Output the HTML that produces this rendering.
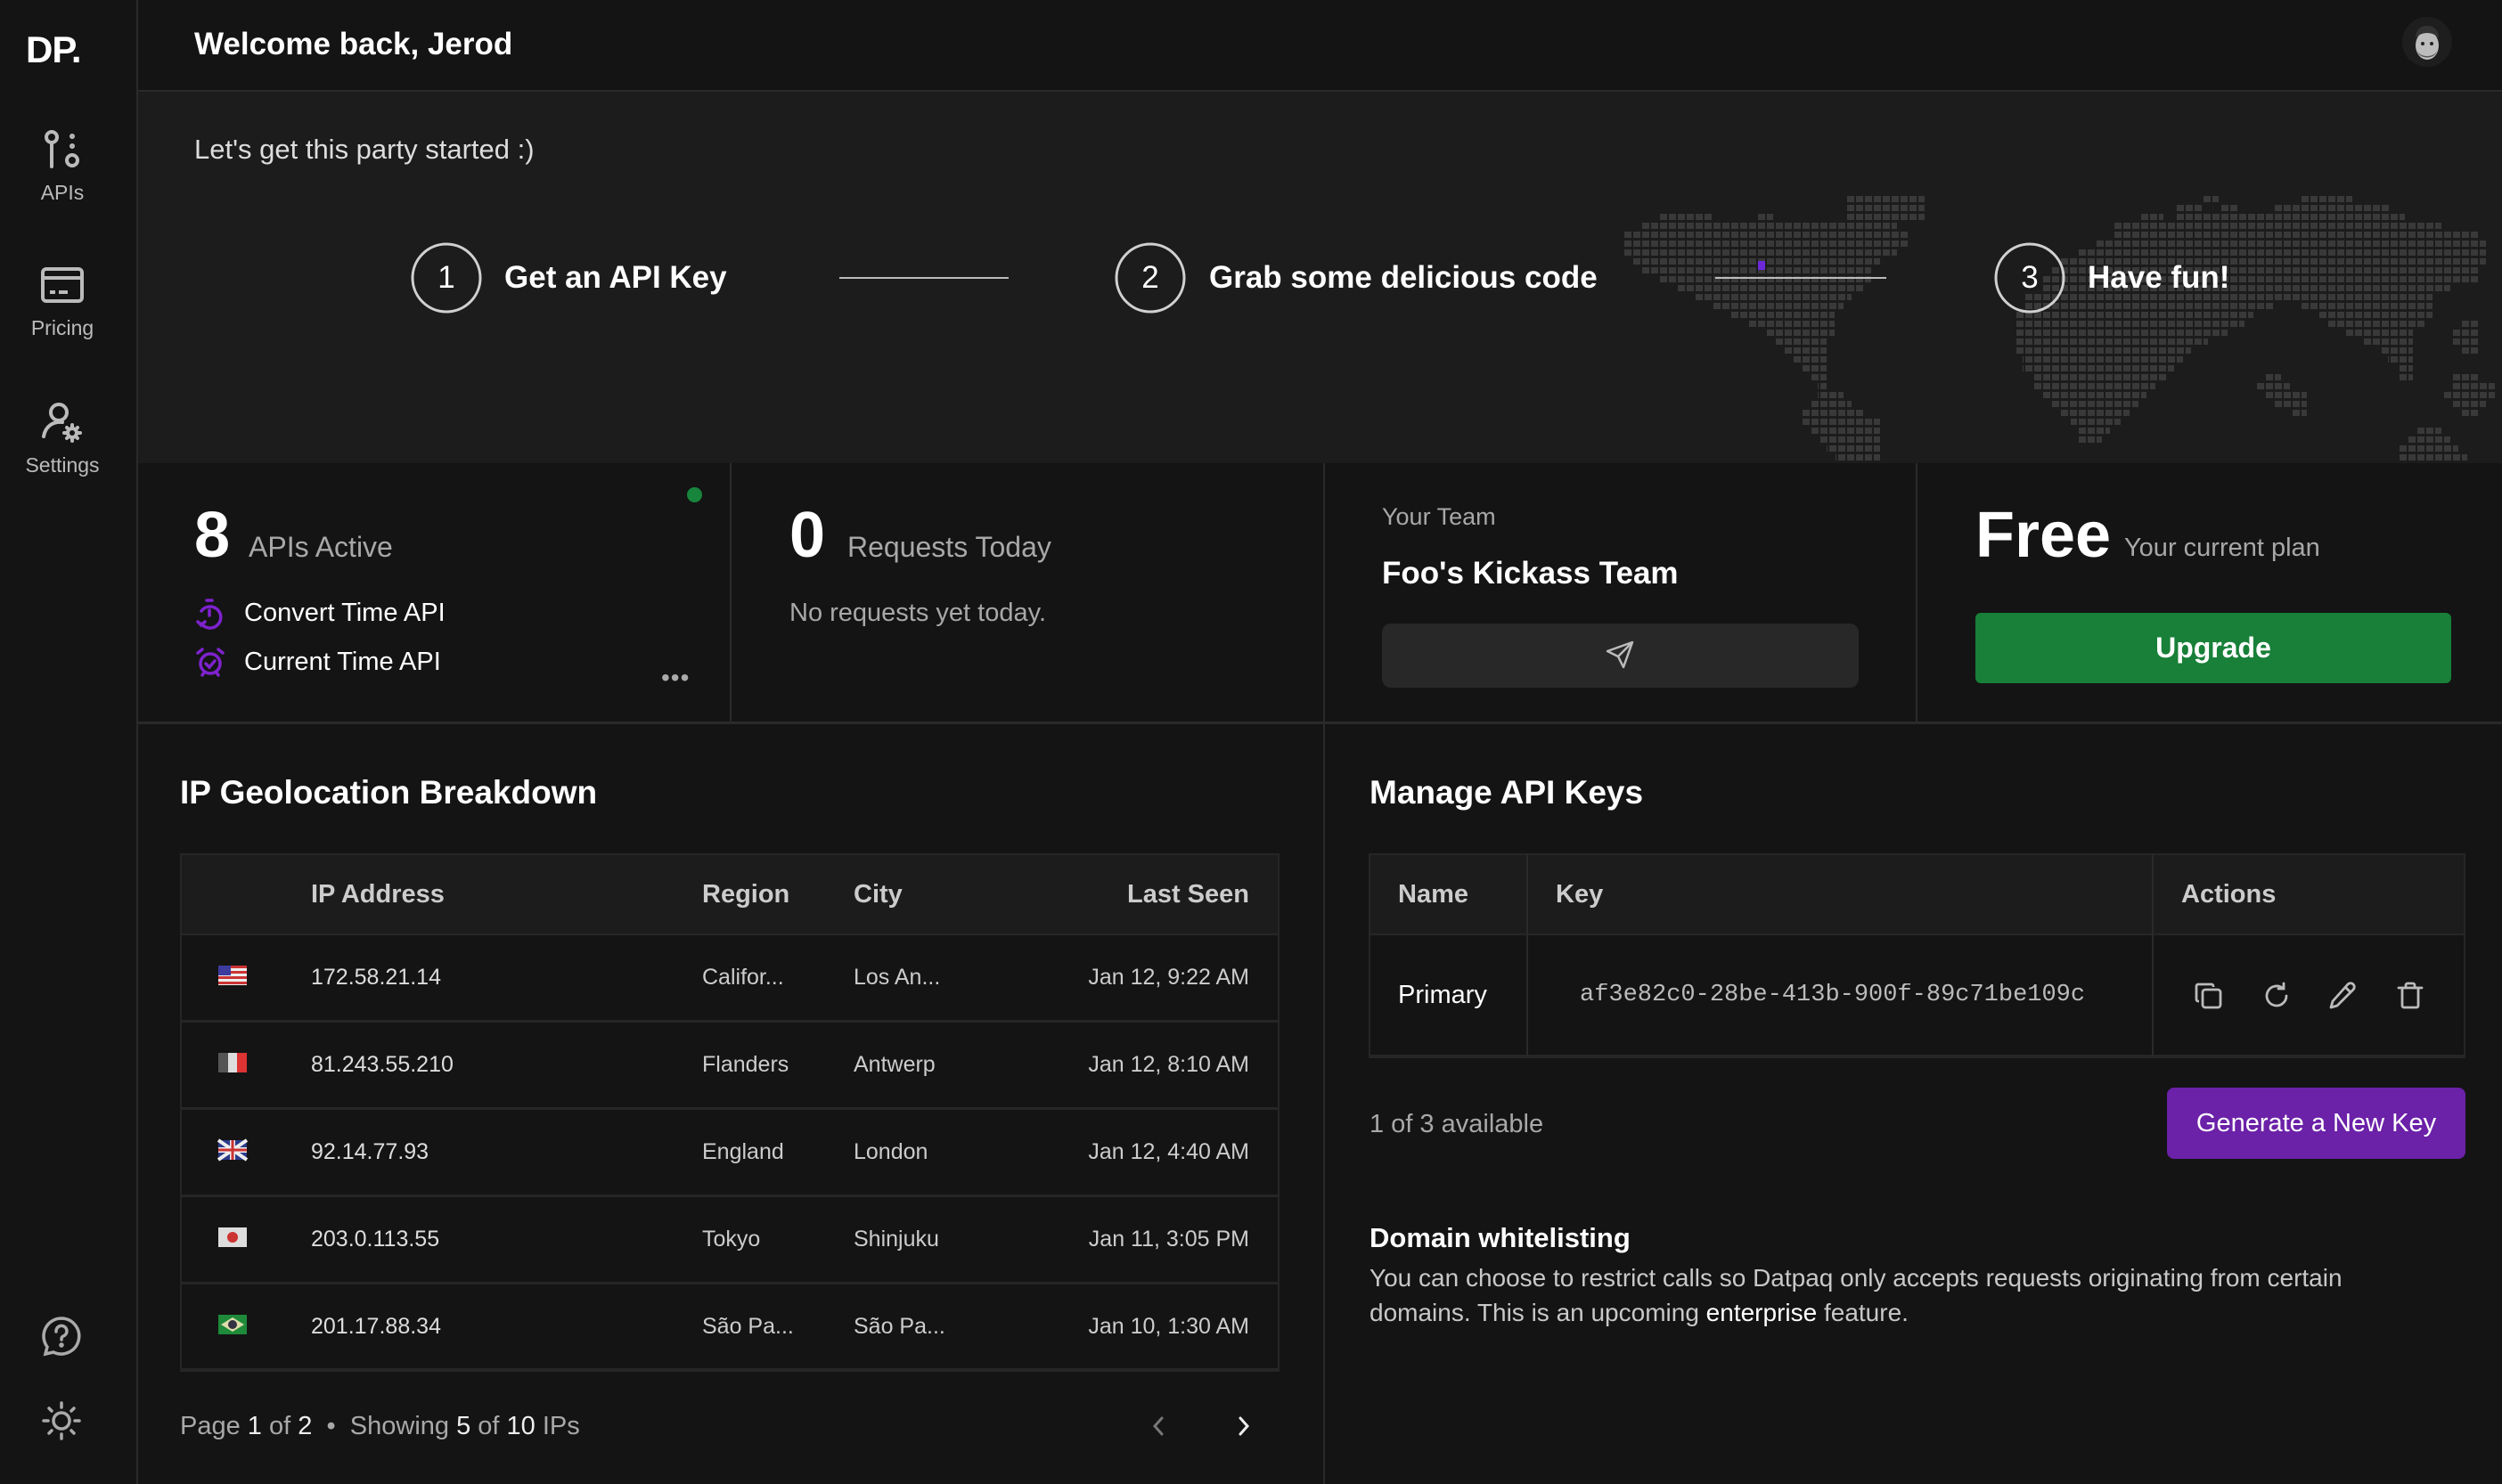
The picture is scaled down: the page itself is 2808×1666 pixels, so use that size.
<!DOCTYPE html>
<html><head><meta charset="utf-8"><style>
*{margin:0;padding:0;box-sizing:border-box}
body{width:2808px;height:1666px;background:#141414;font-family:"Liberation Sans",sans-serif;color:#fff;position:relative;overflow:hidden}
.a{position:absolute;white-space:nowrap;line-height:1}
.g{color:#a8a8a8}
.b{font-weight:bold}
.ln{position:absolute;background:#2a2a2a}
svg{position:absolute;overflow:visible}
</style></head><body>
<!-- sidebar -->
<div class="ln" style="left:153px;top:0;width:2px;height:1666px"></div>
<div class="a b" style="left:29px;top:35px;font-size:42px;letter-spacing:-1px">DP.</div>
<svg style="left:46px;top:145px" width="48" height="48" viewBox="0 0 48 48" fill="none" stroke="#bbb" stroke-width="4" stroke-linecap="round"><circle cx="12" cy="9" r="6"/><line x1="12" y1="15" x2="12" y2="42"/><circle cx="35" cy="35" r="6"/><circle cx="35" cy="8" r="1" fill="#bbb"/><circle cx="35" cy="19" r="1" fill="#bbb"/></svg>
<div class="a" style="left:0;width:140px;text-align:center;top:205px;font-size:23px;color:#bbb">APIs</div>
<svg style="left:46px;top:300px" width="48" height="40" viewBox="0 0 48 40" fill="none" stroke="#bbb" stroke-width="4"><rect x="2" y="2" width="44" height="36" rx="4"/><line x1="2" y1="12" x2="46" y2="12"/><line x1="10" y1="28" x2="16" y2="28"/><line x1="20" y1="28" x2="30" y2="28"/></svg>
<div class="a" style="left:0;width:140px;text-align:center;top:357px;font-size:23px;color:#bbb">Pricing</div>
<svg style="left:46px;top:450px" width="48" height="48" viewBox="0 0 48 48" fill="none" stroke="#bbb" stroke-width="4" stroke-linecap="round"><circle cx="20" cy="13" r="9"/><path d="M3 40 C5 28 14 23 24 24"/><circle cx="35" cy="36" r="5"/><path d="M35 27v3M35 42v3M26 36h3M41 36h3M29 30l2 2M39 40l2 2M29 42l2-2M39 32l2-2"/></svg>
<div class="a" style="left:0;width:140px;text-align:center;top:511px;font-size:23px;color:#bbb">Settings</div>
<svg style="left:46px;top:1477px" width="46" height="46" viewBox="0 0 46 46" fill="none" stroke="#aaa" stroke-width="3.5" stroke-linecap="round"><path d="M23 3a20 20 0 1 1-9 38l-9 2 2-8A20 20 0 0 1 23 3z"/><path d="M17 18a6 6 0 1 1 8 5c-2 1-2 2-2 4"/><circle cx="23" cy="33" r="1" fill="#aaa"/></svg>
<svg style="left:47px;top:1573px" width="44" height="44" viewBox="0 0 44 44" fill="none" stroke="#aaa" stroke-width="3.5" stroke-linecap="round"><circle cx="22" cy="22" r="9"/><path d="M22 2v5M22 37v5M2 22h5M37 22h5M8 8l3 3M33 33l3 3M8 36l3-3M33 11l3-3"/></svg>
<!-- header -->
<div class="ln" style="left:155px;top:101px;width:2653px;height:2px"></div>
<div class="a b" style="left:218px;top:32px;font-size:35px">Welcome back, Jerod</div>
<svg style="left:2696px;top:19px" width="56" height="56" viewBox="0 0 56 56"><circle cx="28" cy="28" r="28" fill="#1e1e1e"/><ellipse cx="28" cy="32" rx="13" ry="16" fill="#bdbdbd"/><path d="M15 24c0-10 6-14 13-14s13 4 13 14c-3-4-8-6-13-6s-10 2-13 6z" fill="#333"/><circle cx="23" cy="30" r="2" fill="#222"/><circle cx="33" cy="30" r="2" fill="#222"/><path d="M17 38c3 8 19 8 22 0c-2 10-20 10-22 0z" fill="#555"/></svg>
<!-- hero -->
<div style="position:absolute;left:155px;top:103px;width:2653px;height:417px;background:#1c1c1c"></div>
<svg style="left:0;top:0" width="2808" height="520">
<defs><pattern id="p" x="1823" y="0" width="10" height="10" patternUnits="userSpaceOnUse"><rect width="8" height="7" fill="#393939"/></pattern></defs>
<g fill="url(#p)">
<rect x="2072" y="220" width="88" height="7"/><rect x="2472" y="220" width="18" height="7"/><rect x="2582" y="220" width="58" height="7"/>
<rect x="2072" y="230" width="88" height="7"/><rect x="2441" y="230" width="30" height="7"/><rect x="2491" y="230" width="20" height="7"/><rect x="2551" y="230" width="130" height="7"/>
<rect x="1863" y="240" width="58" height="7"/><rect x="1972" y="240" width="18" height="7"/><rect x="2072" y="240" width="88" height="7"/><rect x="2403" y="240" width="25" height="7"/><rect x="2441" y="240" width="258" height="7"/>
<rect x="1842" y="250" width="287" height="7"/><rect x="2371" y="250" width="369" height="7"/>
<rect x="1823" y="260" width="318" height="7"/><rect x="2371" y="260" width="410" height="7"/>
<rect x="1823" y="270" width="318" height="7"/><rect x="2352" y="270" width="438" height="7"/>
<rect x="1823" y="280" width="306" height="7"/><rect x="2333" y="280" width="457" height="7"/>
<rect x="1832" y="290" width="278" height="7"/><rect x="2311" y="290" width="479" height="7"/>
<rect x="1842" y="300" width="258" height="7"/><rect x="2302" y="300" width="479" height="7"/>
<rect x="1863" y="310" width="237" height="7"/><rect x="2292" y="310" width="489" height="7"/>
<rect x="1883" y="320" width="208" height="7"/><rect x="2292" y="320" width="458" height="7"/>
<rect x="1902" y="330" width="176" height="7"/><rect x="2273" y="330" width="457" height="7"/>
<rect x="1921" y="340" width="148" height="7"/><rect x="2273" y="340" width="278" height="7"/><rect x="2582" y="340" width="148" height="7"/>
<rect x="1943" y="350" width="116" height="7"/><rect x="2261" y="350" width="268" height="7"/><rect x="2601" y="350" width="129" height="7"/>
<rect x="1962" y="360" width="97" height="7"/><rect x="2261" y="360" width="258" height="7"/><rect x="2611" y="360" width="110" height="7"/><rect x="2762" y="360" width="19" height="7"/>
<rect x="1982" y="370" width="77" height="7"/><rect x="2261" y="370" width="239" height="7"/><rect x="2633" y="370" width="75" height="7"/><rect x="2752" y="370" width="29" height="7"/>
<rect x="1993" y="380" width="57" height="7"/><rect x="2261" y="380" width="217" height="7"/><rect x="2652" y="380" width="56" height="7"/><rect x="2752" y="380" width="29" height="7"/>
<rect x="2003" y="390" width="47" height="7"/><rect x="2261" y="390" width="198" height="7"/><rect x="2671" y="390" width="37" height="7"/><rect x="2762" y="390" width="19" height="7"/>
<rect x="2012" y="400" width="38" height="7"/><rect x="2270" y="400" width="180" height="7"/><rect x="2680" y="400" width="28" height="7"/>
<rect x="2022" y="410" width="28" height="7"/><rect x="2270" y="410" width="170" height="7"/><rect x="2692" y="410" width="16" height="7"/>
<rect x="2031" y="420" width="19" height="7"/><rect x="2283" y="420" width="148" height="7"/><rect x="2541" y="420" width="19" height="7"/><rect x="2692" y="420" width="16" height="7"/><rect x="2752" y="420" width="29" height="7"/>
<rect x="2040" y="430" width="10" height="7"/><rect x="2283" y="430" width="136" height="7"/><rect x="2532" y="430" width="38" height="7"/><rect x="2752" y="430" width="48" height="7"/>
<rect x="2040" y="440" width="29" height="7"/><rect x="2292" y="440" width="117" height="7"/><rect x="2541" y="440" width="48" height="7"/><rect x="2742" y="440" width="58" height="7"/>
<rect x="2031" y="450" width="47" height="7"/><rect x="2302" y="450" width="98" height="7"/><rect x="2551" y="450" width="38" height="7"/><rect x="2752" y="450" width="38" height="7"/>
<rect x="2022" y="460" width="69" height="7"/><rect x="2311" y="460" width="79" height="7"/><rect x="2573" y="460" width="16" height="7"/><rect x="2762" y="460" width="19" height="7"/>
<rect x="2022" y="470" width="88" height="7"/><rect x="2324" y="470" width="56" height="7"/>
<rect x="2031" y="480" width="79" height="7"/><rect x="2333" y="480" width="35" height="7"/><rect x="2711" y="480" width="29" height="7"/>
<rect x="2041" y="490" width="69" height="7"/><rect x="2333" y="490" width="26" height="7"/><rect x="2702" y="490" width="48" height="7"/>
<rect x="2050" y="500" width="60" height="7"/><rect x="2692" y="500" width="67" height="7"/>
<rect x="2060" y="510" width="50" height="7"/><rect x="2692" y="510" width="77" height="7"/>
</g>
<rect x="1973" y="293" width="8" height="10" fill="#6d28d9"/>
<g fill="none" stroke="#d0d0d0" stroke-width="3"><circle cx="501" cy="312" r="38"/><circle cx="1291" cy="312" r="38"/><circle cx="2278" cy="312" r="38"/></g>
<g stroke="#bbb" stroke-width="2"><line x1="942" y1="312" x2="1132" y2="312"/><line x1="1925" y1="312" x2="2117" y2="312"/></g>
</svg>
<div class="a" style="left:218px;top:152px;font-size:31px;color:#ddd">Let's get this party started :)</div>
<div class="a" style="left:481px;width:40px;text-align:center;top:294px;font-size:35px">1</div>
<div class="a b" style="left:566px;top:294px;font-size:35px">Get an API Key</div>
<div class="a" style="left:1271px;width:40px;text-align:center;top:294px;font-size:35px">2</div>
<div class="a b" style="left:1357px;top:294px;font-size:35px">Grab some delicious code</div>
<div class="a" style="left:2258px;width:40px;text-align:center;top:294px;font-size:35px">3</div>
<div class="a b" style="left:2343px;top:294px;font-size:35px">Have fun!</div>
<!-- stats -->
<div class="ln" style="left:819px;top:520px;width:2px;height:291px"></div>
<div class="ln" style="left:1485px;top:520px;width:2px;height:1146px"></div>
<div class="ln" style="left:2150px;top:520px;width:2px;height:291px"></div>
<div class="ln" style="left:155px;top:810px;width:2653px;height:3px"></div>
<div class="a b" style="left:218px;top:565px;font-size:72px">8</div>
<div class="a g" style="left:279px;top:598px;font-size:32px">APIs Active</div>
<div style="position:absolute;left:771px;top:547px;width:17px;height:17px;border-radius:50%;background:#17853b"></div>
<svg style="left:220px;top:672px" width="32" height="34" viewBox="0 0 32 34" fill="none" stroke="#7e22ce" stroke-width="3.5" stroke-linecap="round"><path d="M12 2h6"/><path d="M6 28a12 12 0 1 0 0-14"/><path d="M15 13v6"/><path d="M2 26l4 4 4-4"/></svg>
<div class="a" style="left:274px;top:674px;font-size:29px">Convert Time API</div>
<svg style="left:219px;top:727px" width="34" height="34" viewBox="0 0 34 34" fill="none" stroke="#7e22ce" stroke-width="3.5" stroke-linecap="round"><circle cx="17" cy="18" r="11"/><path d="M12 18l4 4 6-7"/><path d="M3 6l5-4M31 6l-5-4M8 31l2-3M26 31l-2-3"/></svg>
<div class="a" style="left:274px;top:729px;font-size:29px">Current Time API</div>
<div class="a" style="left:742px;top:747px;font-size:28px;color:#aaa;letter-spacing:1px">•••</div>
<div class="a b" style="left:886px;top:565px;font-size:72px">0</div>
<div class="a g" style="left:951px;top:598px;font-size:32px">Requests Today</div>
<div class="a g" style="left:886px;top:674px;font-size:29px">No requests yet today.</div>
<div class="a g" style="left:1551px;top:567px;font-size:27px">Your Team</div>
<div class="a b" style="left:1551px;top:626px;font-size:35px">Foo's Kickass Team</div>
<div style="position:absolute;left:1551px;top:700px;width:535px;height:72px;border-radius:10px;background:#282828"></div>
<svg style="left:1802px;top:719px" width="32" height="32" viewBox="0 0 32 32" fill="none" stroke="#bbb" stroke-width="2.5" stroke-linejoin="round"><path d="M30 2L2 12l12 6 6 12z"/><path d="M30 2L14 18"/></svg>
<div class="a b" style="left:2217px;top:565px;font-size:72px">Free</div>
<div class="a g" style="left:2384px;top:601px;font-size:29px">Your current plan</div>
<div style="position:absolute;left:2217px;top:688px;width:534px;height:79px;border-radius:6px;background:#188038;text-align:center;line-height:79px;font-size:32px;font-weight:bold">Upgrade</div>
<!-- IP table -->
<div class="a b" style="left:202px;top:871px;font-size:37px">IP Geolocation Breakdown</div>
<div style="position:absolute;left:202px;top:958px;width:1234px;height:582px;border:2px solid #262626;border-bottom-width:4px">
<div style="height:90px;background:#1c1c1c;border-bottom:2px solid #262626"></div>
<div style="height:98px;border-bottom:3px solid #262626"></div>
<div style="height:98px;border-bottom:3px solid #262626"></div>
<div style="height:98px;border-bottom:3px solid #262626"></div>
<div style="height:98px;border-bottom:3px solid #262626"></div>
</div>
<div class="a b" style="left:349px;top:990px;font-size:29px;color:#ccc">IP Address</div>
<div class="a b" style="left:788px;top:990px;font-size:29px;color:#ccc">Region</div>
<div class="a b" style="left:958px;top:990px;font-size:29px;color:#ccc">City</div>
<div class="a b" style="left:1102px;width:300px;text-align:right;top:990px;font-size:29px;color:#ccc">Last Seen</div>
<!-- flags -->
<svg style="left:245px;top:1084px" width="32" height="22" viewBox="0 0 32 22"><rect width="32" height="22" fill="#eee"/><g fill="#c33"><rect y="0" width="32" height="3"/><rect y="6" width="32" height="3"/><rect y="12" width="32" height="3"/><rect y="18" width="32" height="3"/></g><rect width="14" height="11" fill="#3c3b9e"/></svg>
<svg style="left:245px;top:1182px" width="32" height="22" viewBox="0 0 32 22"><rect width="11" height="22" fill="#555"/><rect x="11" width="10" height="22" fill="#ddd"/><rect x="21" width="11" height="22" fill="#d33"/></svg>
<svg style="left:245px;top:1280px" width="32" height="22" viewBox="0 0 32 22"><rect width="32" height="22" fill="#2a3a8a"/><path d="M0 0L32 22M32 0L0 22" stroke="#eee" stroke-width="4"/><path d="M16 0v22M0 11h32" stroke="#eee" stroke-width="6"/><path d="M16 0v22M0 11h32" stroke="#c33" stroke-width="3"/></svg>
<svg style="left:245px;top:1378px" width="32" height="22" viewBox="0 0 32 22"><rect width="32" height="22" fill="#ddd"/><circle cx="16" cy="11" r="6" fill="#c33"/></svg>
<svg style="left:245px;top:1476px" width="32" height="22" viewBox="0 0 32 22"><rect width="32" height="22" fill="#1e8a3a"/><path d="M16 3L29 11L16 19L3 11z" fill="#dda"/><circle cx="16" cy="11" r="5" fill="#334"/></svg>
<div class="a" style="left:349px;top:1085px;font-size:25px;color:#ddd">172.58.21.14</div>
<div class="a" style="left:788px;top:1085px;font-size:25px;color:#ccc">Califor...</div>
<div class="a" style="left:958px;top:1085px;font-size:25px;color:#ccc">Los An...</div>
<div class="a" style="left:1102px;width:300px;text-align:right;top:1085px;font-size:25px;color:#ccc">Jan 12, 9:22 AM</div>
<div class="a" style="left:349px;top:1183px;font-size:25px;color:#ddd">81.243.55.210</div>
<div class="a" style="left:788px;top:1183px;font-size:25px;color:#ccc">Flanders</div>
<div class="a" style="left:958px;top:1183px;font-size:25px;color:#ccc">Antwerp</div>
<div class="a" style="left:1102px;width:300px;text-align:right;top:1183px;font-size:25px;color:#ccc">Jan 12, 8:10 AM</div>
<div class="a" style="left:349px;top:1281px;font-size:25px;color:#ddd">92.14.77.93</div>
<div class="a" style="left:788px;top:1281px;font-size:25px;color:#ccc">England</div>
<div class="a" style="left:958px;top:1281px;font-size:25px;color:#ccc">London</div>
<div class="a" style="left:1102px;width:300px;text-align:right;top:1281px;font-size:25px;color:#ccc">Jan 12, 4:40 AM</div>
<div class="a" style="left:349px;top:1379px;font-size:25px;color:#ddd">203.0.113.55</div>
<div class="a" style="left:788px;top:1379px;font-size:25px;color:#ccc">Tokyo</div>
<div class="a" style="left:958px;top:1379px;font-size:25px;color:#ccc">Shinjuku</div>
<div class="a" style="left:1102px;width:300px;text-align:right;top:1379px;font-size:25px;color:#ccc">Jan 11, 3:05 PM</div>
<div class="a" style="left:349px;top:1477px;font-size:25px;color:#ddd">201.17.88.34</div>
<div class="a" style="left:788px;top:1477px;font-size:25px;color:#ccc">São Pa...</div>
<div class="a" style="left:958px;top:1477px;font-size:25px;color:#ccc">São Pa...</div>
<div class="a" style="left:1102px;width:300px;text-align:right;top:1477px;font-size:25px;color:#ccc">Jan 10, 1:30 AM</div>
<div class="a g" style="left:202px;top:1587px;font-size:29px">Page <span style="color:#eee">1</span> of <span style="color:#eee">2</span> &nbsp;•&nbsp; Showing <span style="color:#eee">5</span> of <span style="color:#eee">10</span> IPs</div>
<svg style="left:1292px;top:1589px" width="16" height="24" viewBox="0 0 16 24" fill="none" stroke="#777" stroke-width="3" stroke-linecap="round"><path d="M12 3L4 12l8 9"/></svg>
<svg style="left:1388px;top:1589px" width="16" height="24" viewBox="0 0 16 24" fill="none" stroke="#eee" stroke-width="3" stroke-linecap="round"><path d="M4 3l8 9-8 9"/></svg>
<!-- API keys -->
<div class="a b" style="left:1537px;top:871px;font-size:37px">Manage API Keys</div>
<div style="position:absolute;left:1536px;top:958px;width:1231px;height:230px;border:2px solid #262626;border-bottom-width:4px">
<div style="height:90px;background:#1c1c1c;border-bottom:2px solid #262626"></div>
</div>
<div class="ln" style="left:1713px;top:958px;width:2px;height:228px"></div>
<div class="ln" style="left:2415px;top:958px;width:2px;height:228px"></div>
<div class="a b" style="left:1569px;top:990px;font-size:29px;color:#ccc">Name</div>
<div class="a b" style="left:1746px;top:990px;font-size:29px;color:#ccc">Key</div>
<div class="a b" style="left:2448px;top:990px;font-size:29px;color:#ccc">Actions</div>
<div class="a" style="left:1569px;top:1103px;font-size:29px">Primary</div>
<div class="a" style="left:1773px;top:1104px;font-size:27px;font-family:'Liberation Mono',monospace;color:#bbb;width:585px;overflow:hidden">af3e82c0-28be-413b-900f-89c71be109c</div>
<svg style="left:2463px;top:1102px" width="32" height="32" viewBox="0 0 32 32" fill="none" stroke="#bbb" stroke-width="2.8" stroke-linejoin="round"><rect x="9" y="9" width="20" height="20" rx="3"/><path d="M5 22H4a2 2 0 0 1-2-2V5a2 2 0 0 1 2-2h15a2 2 0 0 1 2 2v1"/></svg>
<svg style="left:2539px;top:1102px" width="32" height="32" viewBox="0 0 32 32" fill="none" stroke="#bbb" stroke-width="2.8" stroke-linecap="round"><path d="M27 16a11 11 0 1 1-4-8.5"/><path d="M24 2v6h-6"/></svg>
<svg style="left:2613px;top:1102px" width="32" height="32" viewBox="0 0 32 32" fill="none" stroke="#bbb" stroke-width="2.8" stroke-linejoin="round"><path d="M22 3a3 3 0 0 1 6 6L10 27l-7 2 2-7z"/><path d="M19 6l6 6"/></svg>
<svg style="left:2689px;top:1102px" width="32" height="32" viewBox="0 0 32 32" fill="none" stroke="#bbb" stroke-width="2.8" stroke-linecap="round" stroke-linejoin="round"><path d="M3 7h26"/><path d="M11 7V4a2 2 0 0 1 2-2h6a2 2 0 0 1 2 2v3"/><path d="M7 7v20a2 2 0 0 0 2 2h14a2 2 0 0 0 2-2V7"/></svg>
<div class="a g" style="left:1537px;top:1248px;font-size:29px">1 of 3 available</div>
<div style="position:absolute;left:2432px;top:1221px;width:335px;height:80px;border-radius:8px;background:#6b21a8;text-align:center;line-height:80px;font-size:29px">Generate a New Key</div>
<div class="a b" style="left:1537px;top:1374px;font-size:31px">Domain whitelisting</div>
<div style="position:absolute;left:1537px;top:1415px;width:1185px;font-size:28px;line-height:39px;color:#c8c8c8">You can choose to restrict calls so Datpaq only accepts requests originating from certain domains. This is an upcoming <span style="color:#fff">enterprise</span> feature.</div>
</body></html>
